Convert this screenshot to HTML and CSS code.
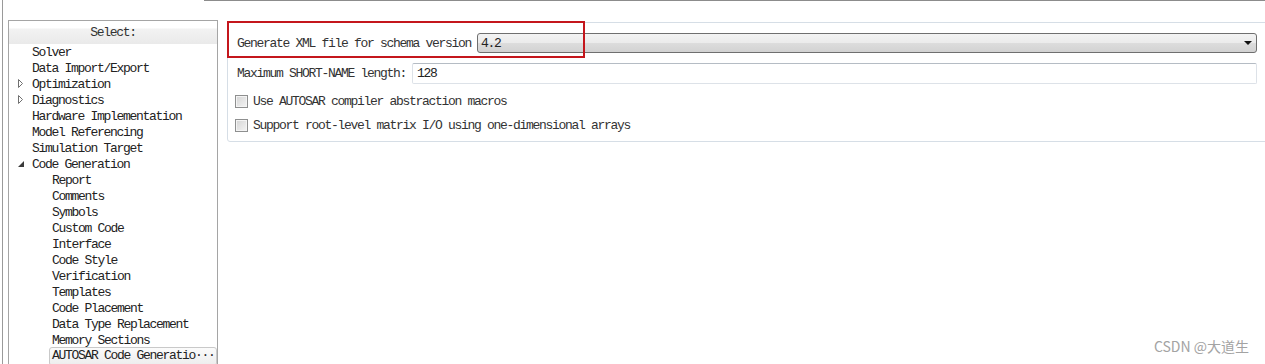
FILE: index.html
```html
<!DOCTYPE html>
<html lang="en">
<head>
    <meta charset="UTF-8">
    <meta name="viewport" content="width=device-width, initial-scale=1.0">
    <title>Configuration Parameters - AUTOSAR Code Generation</title>
    <link rel="stylesheet" href="styles.css">
</head>
<body>
    <div class="window">
        <div class="topline"></div>
        <div class="layout">
            <div class="tree">
                <div class="tree-head">Select:</div>
                <ul class="tree-list">
                    <li class="node">Solver</li>
                    <li class="node">Data Import/Export</li>
                    <li class="node"><span class="twisty"><svg width="6" height="10" viewBox="0 0 6 10"><path d="M0.5 0.5 L4.5 4.5 L0.5 8.5 Z" fill="#fff" stroke="#707070"/></svg></span>Optimization</li>
                    <li class="node"><span class="twisty"><svg width="6" height="10" viewBox="0 0 6 10"><path d="M0.5 0.5 L4.5 4.5 L0.5 8.5 Z" fill="#fff" stroke="#707070"/></svg></span>Diagnostics</li>
                    <li class="node">Hardware Implementation</li>
                    <li class="node">Model Referencing</li>
                    <li class="node">Simulation Target</li>
                    <li class="node"><span class="twisty"><svg width="7" height="7" viewBox="0 0 7 7"><path d="M6 0 L6 6 L0 6 Z" fill="#3a3a3a"/></svg></span>Code Generation</li>
                    <li class="node child">Report</li>
                    <li class="node child">Comments</li>
                    <li class="node child">Symbols</li>
                    <li class="node child">Custom Code</li>
                    <li class="node child">Interface</li>
                    <li class="node child">Code Style</li>
                    <li class="node child">Verification</li>
                    <li class="node child">Templates</li>
                    <li class="node child">Code Placement</li>
                    <li class="node child">Data Type Replacement</li>
                    <li class="node child">Memory Sections</li>
                    <li class="node child selected"><span class="sel-box">AUTOSAR Code Generatio···</span></li>
                </ul>
            </div>
            <div class="pane">
                <div class="highlight"></div>
                <div class="field field-schema">
                    <span class="label">Generate XML file for schema version</span>
                    <div class="combo"><span class="combo-value">4.2</span><i class="combo-arrow"></i></div>
                </div>
                <div class="field field-name">
                    <span class="label">Maximum SHORT-NAME length:</span>
                    <div class="textbox">128</div>
                </div>
                <div class="check first">
                    <span class="box"></span>
                    <span class="label">Use AUTOSAR compiler abstraction macros</span>
                </div>
                <div class="check">
                    <span class="box"></span>
                    <span class="label">Support root-level matrix I/O using one-dimensional arrays</span>
                </div>
            </div>
        </div>
        <div class="watermark">CSDN @大道生</div>
    </div>
</body>
</html>
```

FILE: styles.css
```css
html, body {
    margin: 0;
    padding: 0;
    height: 100%;
    overflow: hidden;
    background: #fff;
}
body {
    font-family: "Liberation Mono", monospace;
    font-size: 13px;
    letter-spacing: -1.3px;
    color: #222;
}
.window {
    position: relative;
    height: 364px;
    overflow: hidden;
    margin-left: 2px;
    border-left: 1px solid #9a9a9a;
}
.topline {
    margin-left: 201px;
    border-top: 1px solid #8c8c8c;
}
.layout {
    display: flex;
    align-items: flex-start;
    padding-left: 5px;
}

/* tree on the left */
.tree {
    width: 210px;
    height: 344px;
    box-sizing: border-box;
    margin-top: 19px;
    border: 1px solid #a5a5a5;
    border-bottom: none;
    flex-shrink: 0;
    overflow: hidden;
}
.tree-head {
    height: 23px;
    line-height: 24px;
    text-align: center;
    color: #333;
    background: linear-gradient(#fff 0%, #fff 30%, #f2f2f2 35%, #eaeaea 100%);
}
.tree-list {
    list-style: none;
    margin: 0;
    padding: 0;
}
.node {
    display: flex;
    align-items: center;
    height: 16px;
    padding-left: 23px;
    white-space: nowrap;
}
.node.child {
    padding-left: 43px;
}
.twisty {
    display: flex;
    align-items: center;
    width: 14px;
    margin-left: -14px;
    height: 16px;
}
.twisty svg {
    display: block;
}
.selected .sel-box {
    flex: 1;
    height: 17px;
    line-height: 16px;
    margin: 1px 0 0 -3px;
    padding-left: 2px;
    border: 1px solid #c9c9c9;
    border-radius: 3px;
    background: linear-gradient(#fbfbfb, #ededed);
}

/* settings pane */
.pane {
    position: relative;
    flex: 1;
    margin: 21px -3px 0 9px;
    padding: 10px 10px 8px 9px;
    border: 1px solid #d6dee6;
    border-radius: 3px;
}
.highlight {
    position: absolute;
    left: -1px;
    top: -2px;
    width: 358px;
    height: 37px;
    box-sizing: border-box;
    border: 2px solid #c4161c;
}
.field {
    display: flex;
    align-items: center;
    gap: 6px;
    white-space: nowrap;
}
.label {
    color: #333;
    white-space: nowrap;
}
.combo {
    flex: 1;
    display: flex;
    align-items: center;
    justify-content: space-between;
    height: 20px;
    box-sizing: border-box;
    padding: 0 4px 0 3px;
    border: 1px solid #6f6f6f;
    border-radius: 3px;
    background: linear-gradient(#f3f3f3 0%, #ebebeb 48%, #dcdcdc 52%, #d2d2d2 100%);
}
.combo-arrow {
    width: 0;
    height: 0;
    border-left: 4px solid transparent;
    border-right: 4px solid transparent;
    border-top: 4px solid #111;
}
.field-name {
    margin-top: 10px;
}
.textbox {
    flex: 1;
    height: 21px;
    line-height: 19px;
    box-sizing: border-box;
    padding-left: 4px;
    border: 1px solid #dde2e8;
    border-top-color: #b5bcc4;
    border-radius: 2px;
}
.check {
    display: flex;
    align-items: center;
    gap: 5px;
    height: 16px;
    margin-top: 8px;
    margin-left: -2px;
}
.check.first {
    margin-top: 9px;
}
.box {
    width: 13px;
    height: 13px;
    box-sizing: border-box;
    border: 1px solid #8e8f8f;
    box-shadow: inset 0 0 0 1px #f4f4f4;
    background: linear-gradient(135deg, #d4d4d4, #f4f4f4);
}

.watermark {
    position: absolute;
    right: 16px;
    bottom: 8px;
    font-family: "Noto Sans CJK SC", "Noto Sans", sans-serif;
    font-size: 14px;
    letter-spacing: 0;
    color: #a3a3a3;
}
```
